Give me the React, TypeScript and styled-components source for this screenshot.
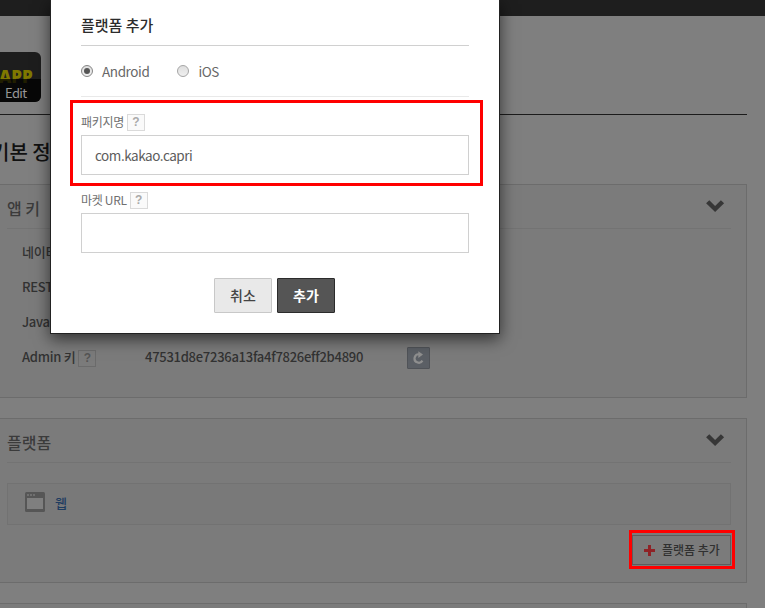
import React from "react";
import styled, { createGlobalStyle } from "styled-components";

const Global = createGlobalStyle`
  * { box-sizing: border-box; }
  html, body { margin: 0; padding: 0; overflow: hidden; }
  body { background: #7f7f7f; font-family: "Noto Sans CJK KR", "Noto Sans", sans-serif; }
  button, input { font-family: inherit; }
`;

const Screen = styled.div`
  position: relative;
  width: 765px;
  height: 608px;
  overflow: hidden;
`;

const Page = styled.div`
  display: flex;
  flex-direction: column;
  height: 608px;
`;

const TopBar = styled.div`
  flex: none;
  height: 16px;
  background: #1e1e1e;
`;

const Content = styled.main`
  flex: none;
  width: 747px;
`;

const AppHeader = styled.header`
  height: 99px;
  padding-top: 36px;
  border-bottom: 1px solid #1b1b1b;
`;

const AppIcon = styled.div`
  position: relative;
  width: 41px;
  height: 50px;
  padding-top: 15px;
  overflow: hidden;
  border-radius: 0 6px 6px 0;
  background: #1d1d1d;
`;

const AppMark = styled.div`
  margin-left: -1px;
  color: #7f7800;
  font: 800 17px/20px "Open Sans", sans-serif;
  letter-spacing: -0.1px;
`;

const EditLabel = styled.div`
  position: absolute;
  right: 0;
  bottom: 0;
  left: 0;
  height: 23px;
  padding-left: 5px;
  background: rgba(0, 0, 0, 0.75);
  color: #969696;
  font-size: 13px;
  line-height: 27px;
  letter-spacing: -0.6px;
`;

const SectionTitle = styled.h1`
  height: 69px;
  margin: 0 0 0 -9px;
  padding-top: 23px;
  color: #111;
  font-size: 20px;
  line-height: 28px;
  font-weight: 500;
`;

const Panel = styled.section<{ $height: number }>`
  height: ${(p) => p.$height}px;
  margin-bottom: 20px;
  padding: 0 15px 0 7px;
  border: 1px solid #6c6c6c;
  border-left: 0;
  background: #7b7b7b;
`;

const PanelHead = styled.div`
  display: flex;
  align-items: flex-start;
  justify-content: space-between;
  height: 44px;
  padding: 15px 6px 0 0;
  border-bottom: 1px solid #737373;
`;

const PanelTitle = styled.h2`
  margin: -4px 0 0;
  color: #3b3b3b;
  font-size: 16px;
  line-height: 24px;
  font-weight: 500;
`;

const KeyList = styled.div`
  padding: 5px 0 0 15px;
`;

const KeyRow = styled.div`
  display: flex;
  align-items: center;
  height: 35px;
  color: #323232;
  font-size: 13px;
  line-height: 20px;
  font-weight: 500;
  letter-spacing: -0.27px;
`;

const KeyName = styled.div`
  display: flex;
  align-items: center;
  width: 123px;
`;

const KeyValue = styled.div`
  width: 262px;
`;

const Hint = styled.span<{ $dim?: boolean }>`
  display: inline-flex;
  align-items: center;
  justify-content: center;
  width: 18px;
  height: 17px;
  margin: ${(p) => (p.$dim ? 4 : 2)}px 0 0 3px;
  border: 1px solid ${(p) => (p.$dim ? "#6b6b6b" : "#dadada")};
  background: ${(p) => (p.$dim ? "transparent" : "#fafafa")};
  color: ${(p) => (p.$dim ? "#555" : "#aaa")};
  font: 700 12px/15px "Liberation Sans", sans-serif;
  letter-spacing: 0;
`;

const RefreshButton = styled.button`
  display: flex;
  align-items: center;
  justify-content: center;
  width: 23px;
  height: 22px;
  margin-top: 3px;
  padding: 0;
  border: 1px solid #505358;
  border-radius: 1px;
  background: #5b5f65;
`;

const PlatformRow = styled.div`
  display: flex;
  align-items: flex-start;
  gap: 10px;
  height: 42px;
  margin-top: 20px;
  padding: 8px 0 0 17px;
  border: 1px solid #727272;
  background: #797979;
`;

const PlatformLink = styled.a`
  padding-top: 1px;
  color: #1f3c60;
  font-size: 13px;
  line-height: 20px;
  font-weight: 500;
`;

const PanelFoot = styled.div`
  display: flex;
  justify-content: flex-end;
  padding-top: 10px;
`;

const Marked = styled.div`
  position: relative;
`;

const Marker = styled.div<{ $t: number; $r: number; $b: number; $l: number }>`
  position: absolute;
  top: ${(p) => -p.$t}px;
  right: ${(p) => -p.$r}px;
  bottom: ${(p) => -p.$b}px;
  left: ${(p) => -p.$l}px;
  border: 3px solid #f00;
  pointer-events: none;
`;

const AddPlatform = styled.button`
  display: flex;
  align-items: center;
  gap: 7px;
  width: 99px;
  height: 30px;
  padding: 0 0 0 11px;
  border: 1px solid #5d5d5d;
  background: #7b7b7b;
  color: #303030;
  font-size: 12px;
  line-height: 20px;
  font-weight: 500;
  white-space: nowrap;
`;

const Dialog = styled.div`
  position: absolute;
  top: -1px;
  left: 50px;
  width: 450px;
  height: 335px;
  padding: 0 30px;
  border: 1px solid #222;
  background: #fff;
  box-shadow: 0 5px 15px rgba(0, 0, 0, 0.6);
`;

const DialogTitle = styled.h2`
  height: 46px;
  margin: 0;
  padding-top: 13px;
  border-bottom: 1px solid #d0d0d0;
  color: #2c2c2c;
  font-size: 15px;
  line-height: 24px;
  font-weight: 500;
`;

const RadioRow = styled.div`
  display: flex;
  align-items: center;
  gap: 28px;
  height: 51px;
  border-bottom: 1px solid #e9e9e9;
`;

const RadioLabel = styled.label`
  display: flex;
  align-items: center;
  gap: 9px;
  color: #686868;
  font-size: 13.5px;
  line-height: 20px;
  letter-spacing: -0.4px;
`;

const Radio = styled.span<{ $checked?: boolean }>`
  display: grid;
  place-items: center;
  width: 12px;
  height: 12px;
  border: 1px solid ${(p) => (p.$checked ? "#858585" : "#a5a5a5")};
  border-radius: 50%;
  background: linear-gradient(#dedede, #f0f0f0);
  &::after {
    content: "";
    width: 6px;
    height: 6px;
    border-radius: 50%;
    background: ${(p) => (p.$checked ? "#555" : "transparent")};
  }
`;

const Field = styled.div`
  position: relative;
  margin-top: 13px;
`;

const FieldLabel = styled.label`
  display: flex;
  align-items: flex-start;
  height: 25px;
  padding-top: 2px;
  color: #707070;
  font-size: 12px;
  line-height: 19px;
  letter-spacing: -0.3px;
`;

const TextInput = styled.input`
  display: block;
  width: 388px;
  height: 40px;
  padding: 0 13px 0 13px;
  border: 1px solid #d0d0d0;
  border-radius: 0;
  outline: 0;
  background: #fff;
  color: #5c5c5c;
  font-size: 13.5px;
  letter-spacing: -0.45px;
`;

const Actions = styled.div`
  display: flex;
  justify-content: center;
  gap: 5px;
  padding: 25px 1px 0 0;
`;

const ActionButton = styled.button<{ $primary?: boolean }>`
  width: 58px;
  height: 35px;
  padding: 0 0 2px;
  border: 1px solid ${(p) => (p.$primary ? "#2b2b2b" : "#c8c8c8")};
  border-radius: 1px;
  background: ${(p) => (p.$primary ? "#555" : "#e9e9e9")};
  color: ${(p) => (p.$primary ? "#fff" : "#444")};
  font-size: 14px;
  font-weight: ${(p) => (p.$primary ? 700 : 500)};
`;

const Chevron = () => (
  <svg width="19" height="13" viewBox="0 0 19 13">
    <path d="M3.3.3 9.1 5.9 14.9.3 18.1 3.3 9.1 12 .1 3.3Z" fill="#373737" />
  </svg>
);

const RefreshIcon = () => (
  <svg width="13" height="14" viewBox="0 0 13 14">
    <path d="M7.3 3.3A4.2 4.2 0 1 0 10.4 9.6" fill="none" stroke="#8f8f8f" strokeWidth="2.2" />
    <path d="M6.3.2 11 3.5 6.3 6.9Z" fill="#8f8f8f" />
  </svg>
);

const BrowserIcon = () => (
  <svg width="20" height="20" viewBox="0 0 20 20">
    <rect width="20" height="20" rx="1.5" fill="#565656" />
    <path d="M2 6h16v11H2z" fill="#7f7f7f" />
    <path d="M2 2h2v2H2zM5 2h2v2H5zM8 2h2v2H8z" fill="#707070" />
  </svg>
);

const PlusIcon = () => (
  <svg width="11" height="11" viewBox="0 0 11 11">
    <path d="M4 0h3v4h4v3H7v4H4V7H0V4h4z" fill="#8f2226" />
  </svg>
);

const keys = [
  { name: "네이티브 앱 키" },
  { name: "REST API 키" },
  { name: "JavaScript 키" },
  { name: "Admin 키", hint: true, value: "47531d8e7236a13fa4f7826eff2b4890" },
];

export default function App() {
  return (
    <Screen>
      <Global />
      <Page>
        <TopBar />
        <Content>
          <AppHeader>
            <AppIcon>
              <AppMark>APP</AppMark>
              <EditLabel>Edit</EditLabel>
            </AppIcon>
          </AppHeader>
          <SectionTitle>기본 정보</SectionTitle>
          <Panel $height={214}>
            <PanelHead>
              <PanelTitle>앱 키</PanelTitle>
              <Chevron />
            </PanelHead>
            <KeyList>
              {keys.map((k) => (
                <KeyRow key={k.name}>
                  <KeyName>
                    {k.name}
                    {k.hint && <Hint $dim>?</Hint>}
                  </KeyName>
                  {k.value && <KeyValue>{k.value}</KeyValue>}
                  {k.value && (
                    <RefreshButton>
                      <RefreshIcon />
                    </RefreshButton>
                  )}
                </KeyRow>
              ))}
            </KeyList>
          </Panel>
          <Panel $height={165}>
            <PanelHead>
              <PanelTitle>플랫폼</PanelTitle>
              <Chevron />
            </PanelHead>
            <PlatformRow>
              <BrowserIcon />
              <PlatformLink>웹</PlatformLink>
            </PlatformRow>
            <PanelFoot>
              <Marked>
                <AddPlatform>
                  <PlusIcon />
                  플랫폼 추가
                </AddPlatform>
                <Marker $t={5} $r={4} $b={4} $l={3} />
              </Marked>
            </PanelFoot>
          </Panel>
          <Panel $height={165} />
        </Content>
      </Page>

      <Dialog>
        <DialogTitle>플랫폼 추가</DialogTitle>
        <RadioRow>
          <RadioLabel>
            <Radio $checked />
            Android
          </RadioLabel>
          <RadioLabel>
            <Radio />
            iOS
          </RadioLabel>
        </RadioRow>
        <Field>
          <FieldLabel>
            패키지명<Hint>?</Hint>
          </FieldLabel>
          <TextInput defaultValue="com.kakao.capri" />
          <Marker $t={10} $r={14} $b={11} $l={11} />
        </Field>
        <Field>
          <FieldLabel>
            마켓 URL<Hint>?</Hint>
          </FieldLabel>
          <TextInput />
        </Field>
        <Actions>
          <ActionButton>취소</ActionButton>
          <ActionButton $primary>추가</ActionButton>
        </Actions>
      </Dialog>
    </Screen>
  );
}
